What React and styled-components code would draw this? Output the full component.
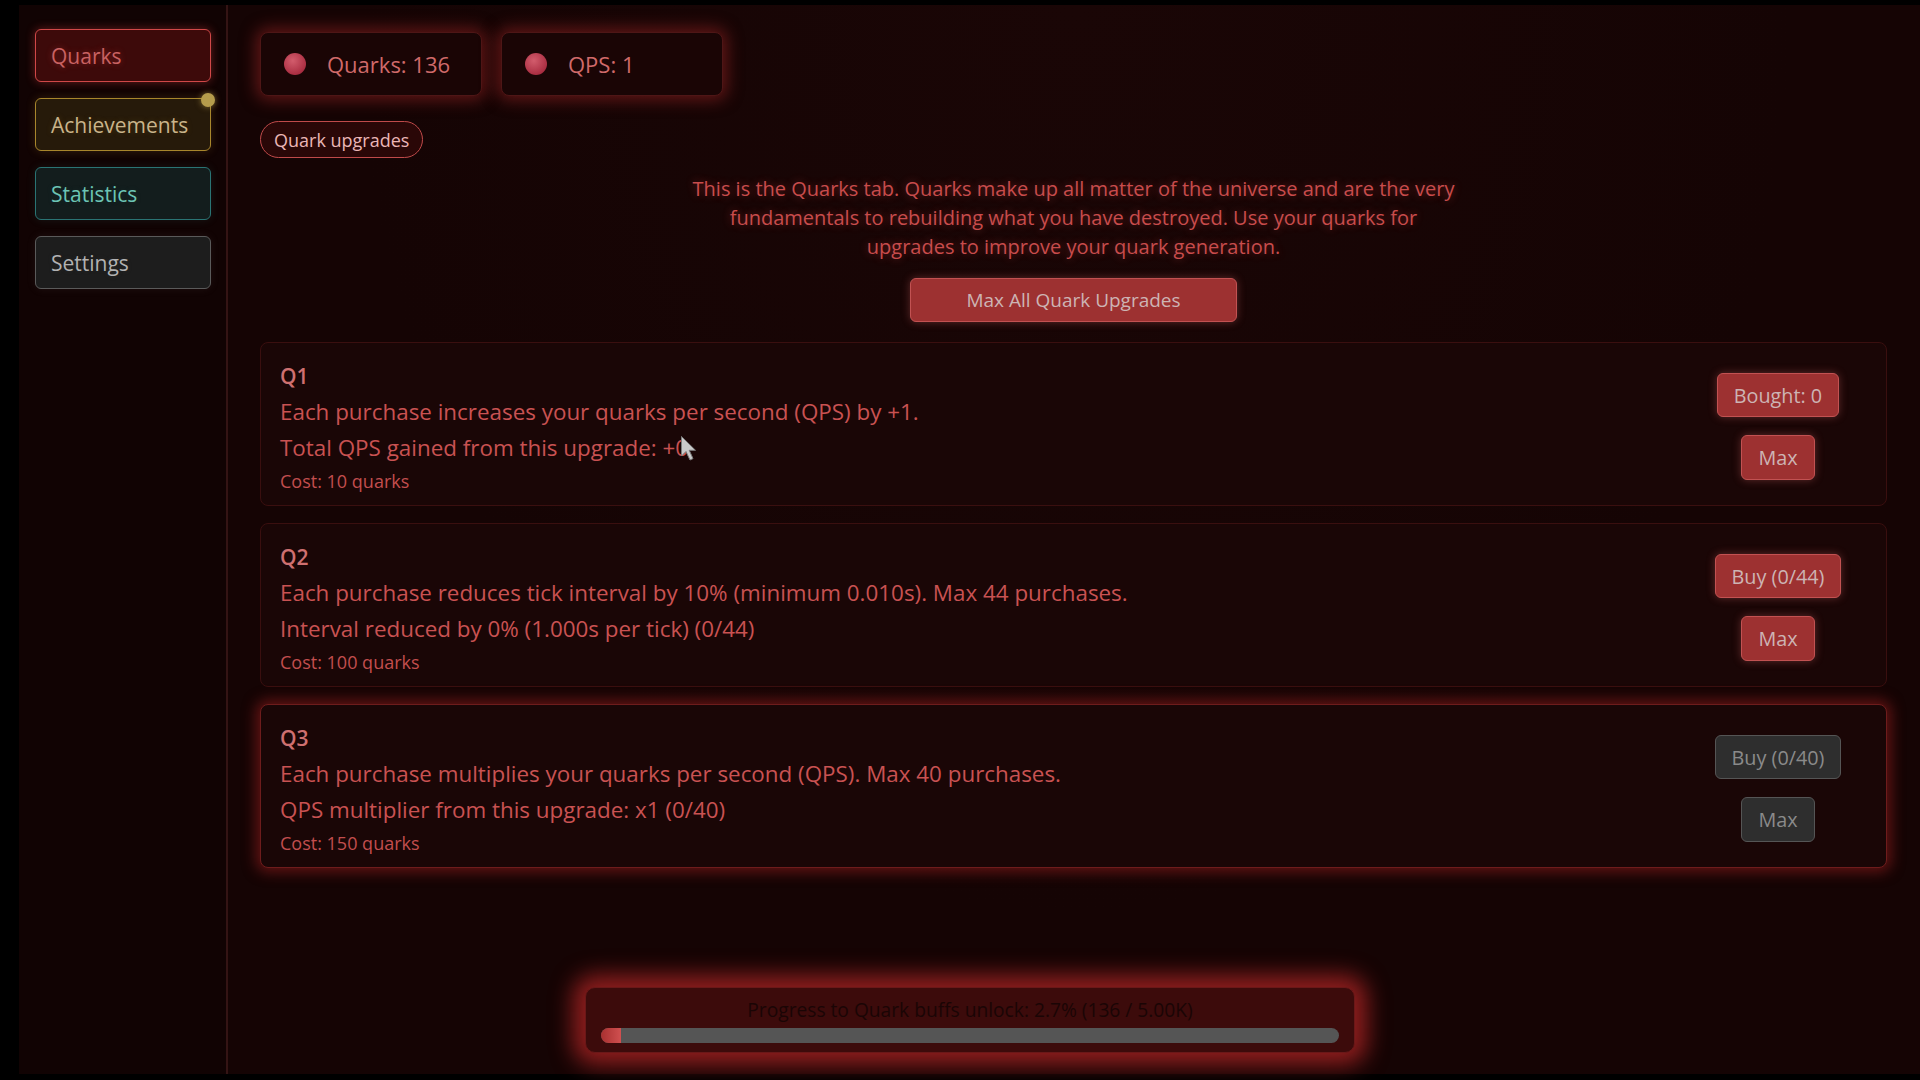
import React from "react";
import styled, { createGlobalStyle } from "styled-components";

const GlobalStyle = createGlobalStyle`
  html, body {
    margin: 0;
    padding: 0;
    background: #000;
  }
  body {
    font-family: "Open Sans", "Noto Sans", sans-serif;
    -webkit-font-smoothing: antialiased;
  }
  * { box-sizing: border-box; }
`;

const Screen = styled.div`
  width: 1920px;
  height: 1080px;
  padding: 5px 0 6px 19px;
  background: #000;
  overflow: hidden;
`;

const Shell = styled.div`
  position: relative;
  display: flex;
  height: 100%;
  background: #150404;
`;

/* ---------- sidebar ---------- */

const Sidebar = styled.nav`
  flex: none;
  width: 209px;
  padding: 24px 16px;
  background: #110303;
  border-right: 2px solid #341414;
  display: flex;
  flex-direction: column;
  gap: 16px;
`;

const tones = {
  red: { border: "#d04848", bg: "#3d0a0a", color: "#c96262", glow: "rgba(210,60,60,0.45)" },
  gold: { border: "#a8862c", bg: "#261a0a", color: "#c9b48a", glow: "rgba(180,140,50,0.22)" },
  teal: { border: "#2a7474", bg: "#131d1d", color: "#6cc4b4", glow: "rgba(60,150,140,0.14)" },
  grey: { border: "#5a5a5a", bg: "#1d1d1d", color: "#b2b2b2", glow: "rgba(150,150,150,0.1)" },
};

const NavButton = styled.button`
  position: relative;
  width: 176px;
  height: 53px;
  padding: 0 15px;
  text-align: left;
  font-family: "Open Sans", sans-serif;
  font-size: 21px;
  color: ${(p) => tones[p.$tone].color};
  background: ${(p) => tones[p.$tone].bg};
  border: 1.5px solid ${(p) => tones[p.$tone].border};
  border-radius: 6px;
  box-shadow: 0 0 10px ${(p) => tones[p.$tone].glow};
  text-shadow: 0 0 6px ${(p) => tones[p.$tone].glow};
  cursor: pointer;
`;

const Badge = styled.span`
  position: absolute;
  top: -6px;
  right: -5px;
  width: 14px;
  height: 14px;
  border-radius: 50%;
  background: #b59c4c;
  box-shadow: 0 0 6px rgba(200, 170, 80, 0.6);
`;

/* ---------- main column ---------- */

const Main = styled.main`
  flex: 1;
  min-width: 0;
  padding: 27px 33px 0 32px;
  display: flex;
  flex-direction: column;
  background: radial-gradient(ellipse at 50% 0%, #1a0606 0%, #150404 60%);
`;

const StatRow = styled.div`
  display: flex;
  gap: 19px;
`;

const StatBox = styled.div`
  width: 222px;
  height: 64px;
  padding-left: 23px;
  display: flex;
  align-items: center;
  gap: 21px;
  background: #1a0505;
  border: 1.5px solid #4e1616;
  border-radius: 8px;
  box-shadow: 0 0 16px 4px rgba(170, 40, 40, 0.5);
  color: #d06a6a;
  font-size: 22px;
`;

const Orb = styled.span`
  flex: none;
  width: 22px;
  height: 22px;
  border-radius: 50%;
  background: radial-gradient(circle at 40% 35%, #d25c6c, #a82c40 75%);
`;

const TabPill = styled.button`
  align-self: flex-start;
  margin-top: 25px;
  height: 37px;
  padding: 0 13px;
  border-radius: 19px;
  border: 1.5px solid #c04a4a;
  background: #2a0707;
  color: #ebb6b6;
  font-family: "Open Sans", sans-serif;
  font-size: 18px;
`;

const Intro = styled.p`
  margin: 16px auto 0;
  max-width: 776px;
  text-align: center;
  font-size: 20px;
  line-height: 29px;
  color: #c84c4c;
  text-shadow: 0 0 8px rgba(220, 70, 70, 0.45);
`;

const ActionButton = styled.button`
  height: ${(p) => p.$h || 44}px;
  padding: 0 16px;
  font-family: "Open Sans", sans-serif;
  font-size: 19.8px;
  border-radius: 6px;
  cursor: pointer;
  color: ${(p) => (p.$off ? "#8a8a8a" : "#cdb4b4")};
  background: ${(p) => (p.$off ? "#2e2e2e" : "#9d3131")};
  border: 1px solid ${(p) => (p.$off ? "#555" : "#c25252")};
  box-shadow: ${(p) => (p.$off ? "none" : "0 0 8px rgba(230, 110, 110, 0.35)")};
`;

const MaxAll = styled(ActionButton)`
  align-self: center;
  margin-top: 17px;
  width: 327px;
  font-size: 19px;
`;

const CardList = styled.div`
  margin-top: 20px;
  display: flex;
  flex-direction: column;
  gap: 17px;
`;

const Card = styled.section`
  display: flex;
  align-items: center;
  justify-content: space-between;
  height: 164px;
  padding: 19px 38px 12px 19px;
  background: #1a0606;
  border: 1px solid ${(p) => (p.$lit ? "#6e1c1c" : "#3a0f0f")};
  border-radius: 8px;
  box-shadow: ${(p) => (p.$lit ? "0 0 14px 4px rgba(150, 30, 30, 0.6)" : "none")};
`;

const Info = styled.div`
  display: flex;
  flex-direction: column;
`;

const Title = styled.div`
  font-size: 21px;
  font-weight: 600;
  line-height: 28px;
  margin-bottom: 4px;
  color: #cf7070;
`;

const Line = styled.div`
  font-size: 22.4px;
  line-height: 36px;
  color: #c95252;
`;

const Cost = styled.div`
  margin-top: 3px;
  font-size: 18px;
  line-height: 24px;
  color: #c24e4e;
`;

const Hovered = styled.span`
  position: relative;
`;

const Pointer = styled.svg`
  position: absolute;
  left: 5px;
  top: 3px;
  width: 18px;
  height: 27px;
`;

const Actions = styled.div`
  width: 140px;
  margin-top: -2px;
  display: flex;
  flex-direction: column;
  align-items: center;
  gap: 18px;
`;

/* ---------- floating progress panel ---------- */

const Progress = styled.div`
  position: absolute;
  left: 566px;
  bottom: 21px;
  width: 770px;
  height: 66px;
  padding: 10px 15px 0;
  background: #3c0b0b;
  border: 1px solid #6a1818;
  border-radius: 10px;
  box-shadow: 0 0 22px 12px rgba(190, 40, 40, 0.72);
`;

const ProgressLabel = styled.div`
  text-align: center;
  font-size: 19.2px;
  line-height: 24px;
  color: #1a0505;
`;

const Track = styled.div`
  margin-top: 6px;
  height: 15px;
  border-radius: 8px;
  background: #555;
  overflow: hidden;
`;

const Fill = styled.div`
  height: 100%;
  background: linear-gradient(90deg, #a83030, #d05050);
`;

const upgrades = [
  {
    id: "Q1",
    lines: ["Each purchase increases your quarks per second (QPS) by +1.", "Total QPS gained from this upgrade: +"],
    hovered: "0",
    cost: "Cost: 10 quarks",
    buy: "Bought: 0",
    off: false,
  },
  {
    id: "Q2",
    lines: [
      "Each purchase reduces tick interval by 10% (minimum 0.010s). Max 44 purchases.",
      "Interval reduced by 0% (1.000s per tick) (0/44)",
    ],
    cost: "Cost: 100 quarks",
    buy: "Buy (0/44)",
    off: false,
  },
  {
    id: "Q3",
    lines: ["Each purchase multiplies your quarks per second (QPS). Max 40 purchases.", "QPS multiplier from this upgrade: x1 (0/40)"],
    cost: "Cost: 150 quarks",
    buy: "Buy (0/40)",
    off: true,
    lit: true,
  },
];

function MousePointer() {
  return (
    <Pointer viewBox="0 0 18 27">
      <path
        d="M1.5 1.5 L1.5 21 L6 16.5 L10 25 L13 23.6 L9.2 15.3 L15.5 15.3 Z"
        fill="#cacaca"
        stroke="#7c7c7c"
        strokeWidth="1"
        strokeLinejoin="round"
      />
    </Pointer>
  );
}

export default function App() {
  const quarks = 136;
  const goal = 5000;
  const pct = (quarks / goal) * 100;

  return (
    <>
      <GlobalStyle />
      <Screen>
        <Shell>
          <Sidebar>
            <NavButton $tone="red">Quarks</NavButton>
            <NavButton $tone="gold">
              Achievements
              <Badge />
            </NavButton>
            <NavButton $tone="teal">Statistics</NavButton>
            <NavButton $tone="grey">Settings</NavButton>
          </Sidebar>

          <Main>
            <StatRow>
              <StatBox>
                <Orb />
                Quarks: {quarks}
              </StatBox>
              <StatBox>
                <Orb />
                QPS: 1
              </StatBox>
            </StatRow>

            <TabPill>Quark upgrades</TabPill>

            <Intro>
              This is the Quarks tab. Quarks make up all matter of the universe and are the very fundamentals to
              rebuilding what you have destroyed. Use your quarks for upgrades to improve your quark generation.
            </Intro>

            <MaxAll>Max All Quark Upgrades</MaxAll>

            <CardList>
              {upgrades.map((u) => (
                <Card key={u.id} $lit={u.lit}>
                  <Info>
                    <Title>{u.id}</Title>
                    <Line>{u.lines[0]}</Line>
                    <Line>
                      {u.lines[1]}
                      {u.hovered && (
                        <Hovered>
                          {u.hovered}
                          <MousePointer />
                        </Hovered>
                      )}
                    </Line>
                    <Cost>{u.cost}</Cost>
                  </Info>
                  <Actions>
                    <ActionButton $off={u.off}>{u.buy}</ActionButton>
                    <ActionButton $off={u.off} $h={45}>
                      Max
                    </ActionButton>
                  </Actions>
                </Card>
              ))}
            </CardList>
          </Main>

          <Progress>
            <ProgressLabel>
              Progress to Quark buffs unlock: {pct.toFixed(1)}% ({quarks} / 5.00K)
            </ProgressLabel>
            <Track>
              <Fill style={{ width: `${pct}%` }} />
            </Track>
          </Progress>
        </Shell>
      </Screen>
    </>
  );
}
